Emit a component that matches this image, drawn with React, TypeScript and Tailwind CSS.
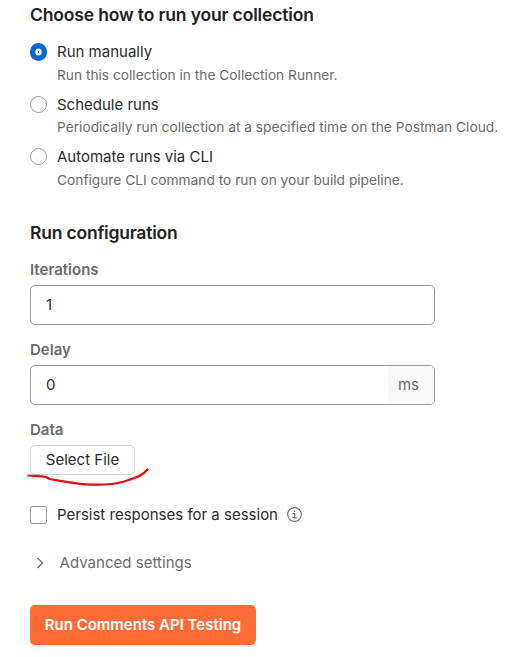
import { useState } from 'react';

const options = [
  { title: 'Run manually', text: 'Run this collection in the Collection Runner.', height: 'h-[53px]', gap: 'mt-[3px]' },
  { title: 'Schedule runs', text: 'Periodically run collection at a specified time on the Postman Cloud.', height: 'h-[52px]', gap: 'mt-[2px]' },
  { title: 'Automate runs via CLI', text: 'Configure CLI command to run on your build pipeline.', height: 'h-[52px]', gap: 'mt-[3px]' },
];

function Radio({ checked }: { checked: boolean }) {
  return (
    <span
      className={
        checked
          ? 'mt-[3px] flex h-[18px] w-[17px] shrink-0 items-center justify-center rounded-full bg-[#0765d1]'
          : 'mt-[3px] flex size-[17px] shrink-0 rounded-full border border-[#999]'
      }
    >
      {checked && (
        <svg width="7" height="8" viewBox="0 0 7 8">
          <ellipse cx="3.5" cy="4" rx="3.2" ry="3.6" fill="#fff" />
          <rect x="3" y="3" width="1" height="2" fill="#0765d1" />
        </svg>
      )}
    </span>
  );
}

export default function App() {
  const [selected, setSelected] = useState(0);
  return (
    <main className="flex h-[657px] w-[521px] flex-col items-start overflow-hidden bg-white pl-[30px] font-['Inter',sans-serif] text-[15px] leading-5 text-[#2b2b2b]">
      <h2 className="mt-[3px] text-[17.5px] leading-6 font-semibold tracking-[-0.15px] text-[#212121]">Choose how to run your collection</h2>
      <div className="mt-[13px] flex flex-col">
        {options.map((o, i) => (
          <div key={o.title} className={`flex gap-[10px] ${o.height}`} onClick={() => setSelected(i)}>
            <Radio checked={selected === i} />
            <div className="flex flex-col whitespace-nowrap">
              <span className="mt-[2px]">{o.title}</span>
              <span className={`text-[13.75px] tracking-[-0.01px] text-[#6b6b6b] ${o.gap}`}>{o.text}</span>
            </div>
          </div>
        ))}
      </div>
      <h2 className="mt-[24px] text-[17.5px] leading-6 font-semibold tracking-[-0.2px] text-[#212121]">Run configuration</h2>
      <label className="mt-[15px] font-semibold text-[#6b6b6b]">Iterations</label>
      <div className="mt-[5px] flex h-10 w-[405px] items-center rounded-[5px] border border-[#999] px-[15px]">1</div>
      <label className="mt-[15px] font-semibold text-[#6b6b6b]">Delay</label>
      <div className="mt-[5px] flex h-10 w-[405px] items-center justify-between overflow-hidden rounded-[5px] border border-[#999] pl-[15px]">
        <span>0</span>
        <span className="flex h-full w-[46px] items-center justify-center bg-[#f9f9f9] pr-[5px] text-[#6b6b6b]">ms</span>
      </div>
      <label className="mt-[15px] font-semibold text-[#6b6b6b]">Data</label>
      <div className="relative mt-[5px]">
        <button className="flex h-[30px] w-[105px] items-center justify-center rounded-[5px] border border-[#d4d4d4]">Select File</button>
        <svg className="absolute top-[20px] -left-[4px]" width="126" height="24" viewBox="0 0 126 24" fill="none" stroke="#e30b13" strokeWidth="2.2" strokeLinecap="round" strokeLinejoin="round">
          <path d="M2.5 10.5C8 11 14 11.2 20 12L23.5 14C35 16 47 18.5 60 19.3C73 20.2 86 20 98 16.5C107 13.5 116 11.5 121.5 4.5" />
        </svg>
      </div>
      <div className="mt-[30px] flex items-center">
        <span className="h-[18px] w-[17px] rounded-[2px] border border-[#999]" />
        <span className="ml-[10px]">Persist responses for a session</span>
        <svg className="mb-[1px] ml-[9px]" width="15" height="15" viewBox="0 0 15 15" fill="none" stroke="#6b6b6b" strokeWidth="1.15">
          <circle cx="7.5" cy="7.5" r="6.85" />
          <path d="M5.7 6.5H7.7V10.5M5.3 10.6H9.7" />
          <path d="M6.8 4.3H8.2" strokeWidth="1.5" />
        </svg>
      </div>
      <div className="mt-7 flex items-center text-[#6b6b6b]">
        <svg className="ml-[6px]" width="9" height="12" viewBox="0 0 9 12" fill="none" stroke="currentColor" strokeWidth="1.3">
          <path d="M1.5 1L6.5 6L1.5 11" />
        </svg>
        <span className="ml-[14.5px] tracking-[0.03px]">Advanced settings</span>
      </div>
      <button className="mt-8 flex h-10 w-[226px] items-center justify-center rounded-[5px] bg-[#ff6c37] font-semibold whitespace-nowrap text-white">Run Comments API Testing</button>
    </main>
  );
}
